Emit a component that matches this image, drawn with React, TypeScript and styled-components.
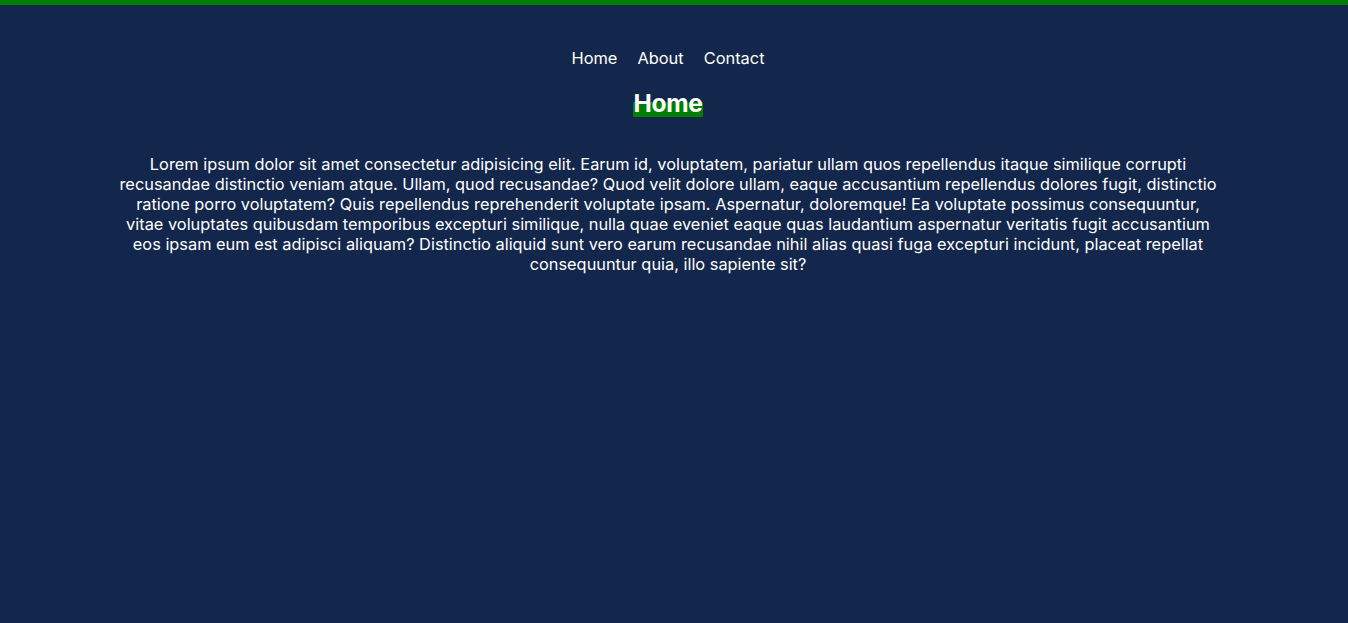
import React from "react";
import styled, { createGlobalStyle } from "styled-components";

const Global = createGlobalStyle`
  html, body { margin: 0; padding: 0; }
  body {
    background: #13264b;
    color: #ffffff;
    font-family: Inter, "Noto Sans", sans-serif;
    min-height: 100vh;
    border-top: 5px solid #008000;
    box-sizing: border-box;
  }
`;

const Page = styled.div`
  display: flex;
  flex-direction: column;
  align-items: center;
  padding: 38px 12px 0 0;
`;

const Nav = styled.nav`
  display: flex;
  gap: 20px;
`;

const NavLink = styled.a`
  color: #ffffff;
  text-decoration: none;
  font-size: 16.4px;
  line-height: 30px;
`;

const Title = styled.h1`
  margin: 16px 0 0;
  font-size: 24.5px;
  line-height: 28px;
  font-weight: 700;
  background: linear-gradient(to bottom, transparent 48%, #008000 48%);
  letter-spacing: -0.3px;
`;

const Text = styled.p`
  margin: 37px 0 0;
  max-width: 1100px;
  text-align: center;
  font-size: 16.35px;
  line-height: 20px;
`;

export default function App() {
  return (
    <>
      <Global />
      <Page>
        <Nav>
          <NavLink href="#">Home</NavLink>
          <NavLink href="#">About</NavLink>
          <NavLink href="#">Contact</NavLink>
        </Nav>
        <Title>Home</Title>
        <Text>
          Lorem ipsum dolor sit amet consectetur adipisicing elit. Earum id, voluptatem, pariatur ullam quos repellendus itaque similique corrupti recusandae distinctio veniam atque. Ullam, quod recusandae? Quod velit dolore ullam, eaque accusantium repellendus dolores fugit, distinctio ratione porro voluptatem? Quis repellendus reprehenderit voluptate ipsam. Aspernatur, doloremque! Ea voluptate possimus consequuntur, vitae voluptates quibusdam temporibus excepturi similique, nulla quae eveniet eaque quas laudantium aspernatur veritatis fugit accusantium eos ipsam eum est adipisci aliquam? Distinctio aliquid sunt vero earum recusandae nihil alias quasi fuga excepturi incidunt, placeat repellat consequuntur quia, illo sapiente sit?
        </Text>
      </Page>
    </>
  );
}
